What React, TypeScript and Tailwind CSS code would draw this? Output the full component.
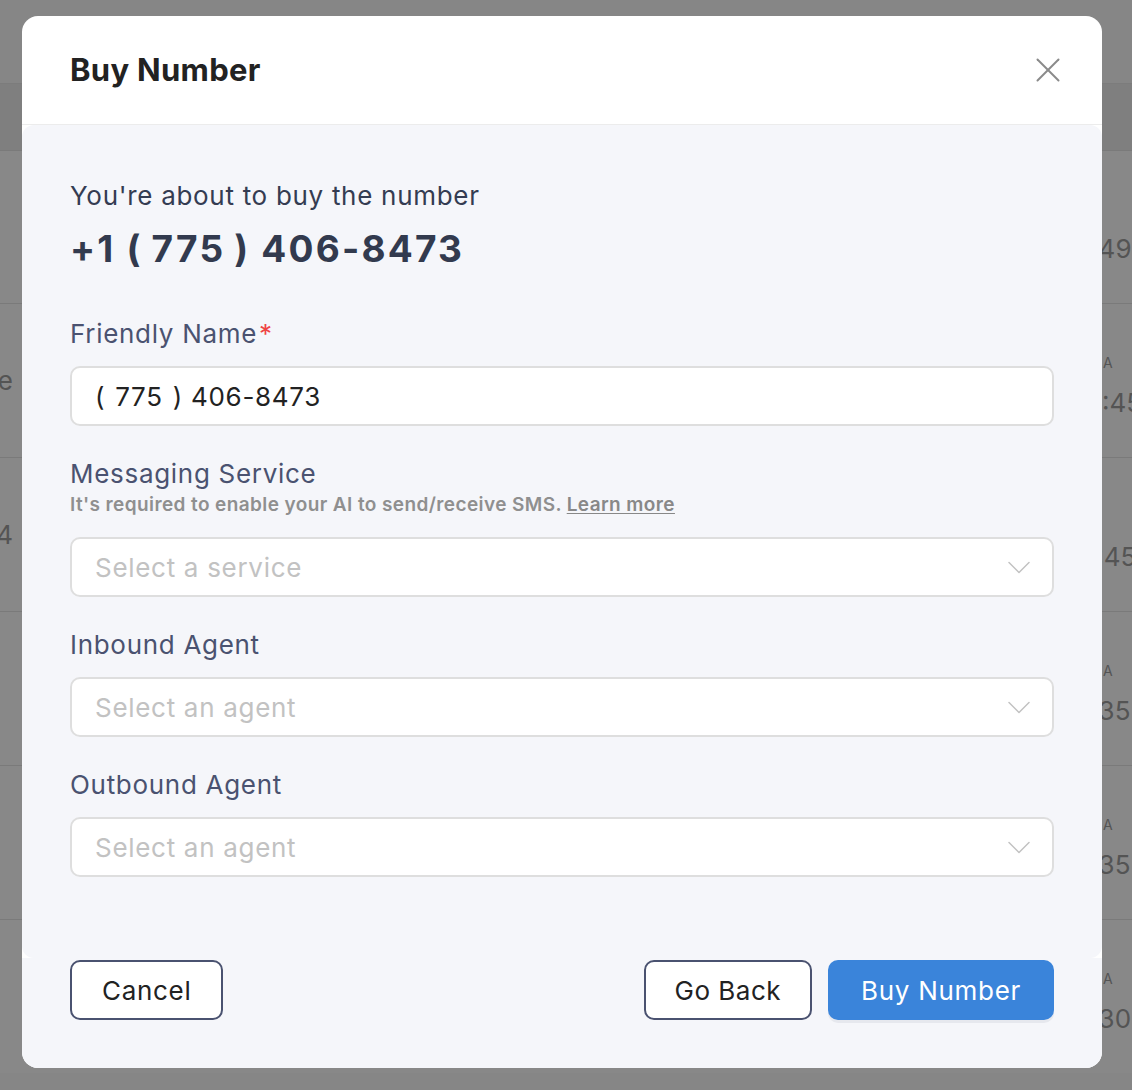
const rows = [
  { h: 'h-[153px]', left: '', right: '9:49', top: '' },
  { h: 'h-[154px]', left: 'Phone', right: '10:45', top: 'A' },
  { h: 'h-[154px]', left: '14', right: '11:45', top: '' },
  { h: 'h-[154px]', left: '', right: '9:35', top: 'A' },
  { h: 'h-[154px]', left: '', right: '9:35', top: 'A' },
  { h: 'h-[154px]', left: '', right: '9:30', top: 'A' },
]

function Chevron() {
  return (
    <svg width="22" height="13" viewBox="0 0 22 13" fill="none" stroke="#c2c2c2" strokeWidth="1.5" strokeLinecap="round" strokeLinejoin="round">
      <polyline points="1,1.5 11,11.5 21,1.5" />
    </svg>
  )
}

function Field({ label, required, hint, children }: { label: string; required?: boolean; hint?: boolean; children: React.ReactNode }) {
  return (
    <div className="flex flex-col">
      <div className="text-[26px] leading-[32px] tracking-[0.7px] text-[#4a5270]">
        {label}
        {required && <span className="text-[#ef4444] ml-[2px]">*</span>}
      </div>
      {hint && (
        <div className="mt-[3px] text-[19px] leading-[24px] tracking-[0.4px] font-semibold text-[#8f8f8f]">
          It's required to enable your AI to send/receive SMS. <span className="underline underline-offset-2 text-[#888]">Learn more</span>
        </div>
      )}
      <div className={hint ? 'mt-[20px]' : 'mt-[16px]'}>{children}</div>
    </div>
  )
}

function Select({ placeholder }: { placeholder: string }) {
  return (
    <div className="h-[60px] rounded-[10px] border-2 border-[#dedede] bg-white flex items-center justify-between pl-[23px] pr-[22px]">
      <span className="text-[26px] tracking-[0.7px] text-[#c2c2c2]">{placeholder}</span>
      <Chevron />
    </div>
  )
}

export default function App() {
  return (
    <div className="relative w-[1132px] h-[1090px] overflow-hidden bg-[#868686]" style={{ fontFamily: 'Inter, "Noto Sans", sans-serif' }}>
      {/* page behind the overlay */}
      <div className="flex flex-col text-[26px] text-[#545454]">
        <div className="h-[84px] border-b border-[#7c7c7c]" />
        <div className="h-[66px] bg-[#7f7f7f]" />
        {rows.map((r, i) => (
          <div key={i} className={`${r.h} border-t border-[#7a7a7a] bg-[#888888] flex items-center justify-between`}>
            <div className="w-[13px] overflow-hidden flex justify-end whitespace-nowrap">{r.left}</div>
            <div className="w-[57px] mt-[8px] flex flex-col whitespace-nowrap">
              <span className="text-[14px] leading-[36px] h-[36px] pl-[28px]">{r.top}</span>
              <span className="leading-[44px]">{r.right}</span>
            </div>
          </div>
        ))}
      </div>

      {/* modal */}
      <div className="absolute left-[22px] top-[16px] w-[1080px] h-[1052px] rounded-[16px] bg-white overflow-hidden flex flex-col">
        <div className="h-[109px] shrink-0 px-[48px] flex items-center justify-between border-b border-[#ececec]">
          <h2 className="text-[31px] font-bold text-[#222222] tracking-[0.3px]">Buy Number</h2>
          <svg width="24" height="24" viewBox="0 0 24 24" className="-mr-[6px]" stroke="#8a8a8a" strokeWidth="2" strokeLinecap="round">
            <line x1="1.5" y1="1.5" x2="22.5" y2="22.5" />
            <line x1="22.5" y1="1.5" x2="1.5" y2="22.5" />
          </svg>
        </div>

        <div className="flex-1 bg-[#f5f6fa] rounded-[12px] px-[48px] pt-[55px] pb-[80px] flex flex-col">
          <div className="text-[26px] leading-[32px] tracking-[0.7px] text-[#343c52]">You're about to buy the number</div>
          <div className="mt-[15px] text-[37px] leading-[44px] font-bold tracking-[2.2px] text-[#323a4e]">
            +1 <span className="mr-[9px]">(</span>775<span className="ml-[9px]">)</span> 406-8473
          </div>

          <div className="mt-[47px] flex flex-col gap-[32px]">
            <Field label="Friendly Name" required>
              <div className="h-[60px] rounded-[10px] border-2 border-[#dedede] bg-white flex items-center px-[23px] text-[26px] tracking-[0.7px] text-[#222222]">
                <span className="mr-[10px]">(</span>775<span className="ml-[10px]">)</span>&nbsp;406-8473
              </div>
            </Field>
            <Field label="Messaging Service" hint>
              <Select placeholder="Select a service" />
            </Field>
            <Field label="Inbound Agent">
              <Select placeholder="Select an agent" />
            </Field>
            <Field label="Outbound Agent">
              <Select placeholder="Select an agent" />
            </Field>
          </div>
        </div>

        <div className="h-[110px] shrink-0 bg-[#f5f6fa] px-[48px] pt-[2px] flex items-start justify-between">
          <button className="h-[60px] px-[30px] rounded-[10px] border-2 border-[#4a5270] bg-white text-[26px] tracking-[0.7px] text-[#222222]">Cancel</button>
          <div className="flex gap-[16px]">
            <button className="h-[60px] px-[29px] rounded-[10px] border-2 border-[#4a5270] bg-white text-[26px] tracking-[0.5px] text-[#222222]">Go Back</button>
            <button className="h-[60px] px-[33px] rounded-[10px] bg-[#3a84da] text-[26px] tracking-[0.7px] text-white shadow-[0_3px_0_#e6e8ee]">Buy Number</button>
          </div>
        </div>
      </div>
    </div>
  )
}
